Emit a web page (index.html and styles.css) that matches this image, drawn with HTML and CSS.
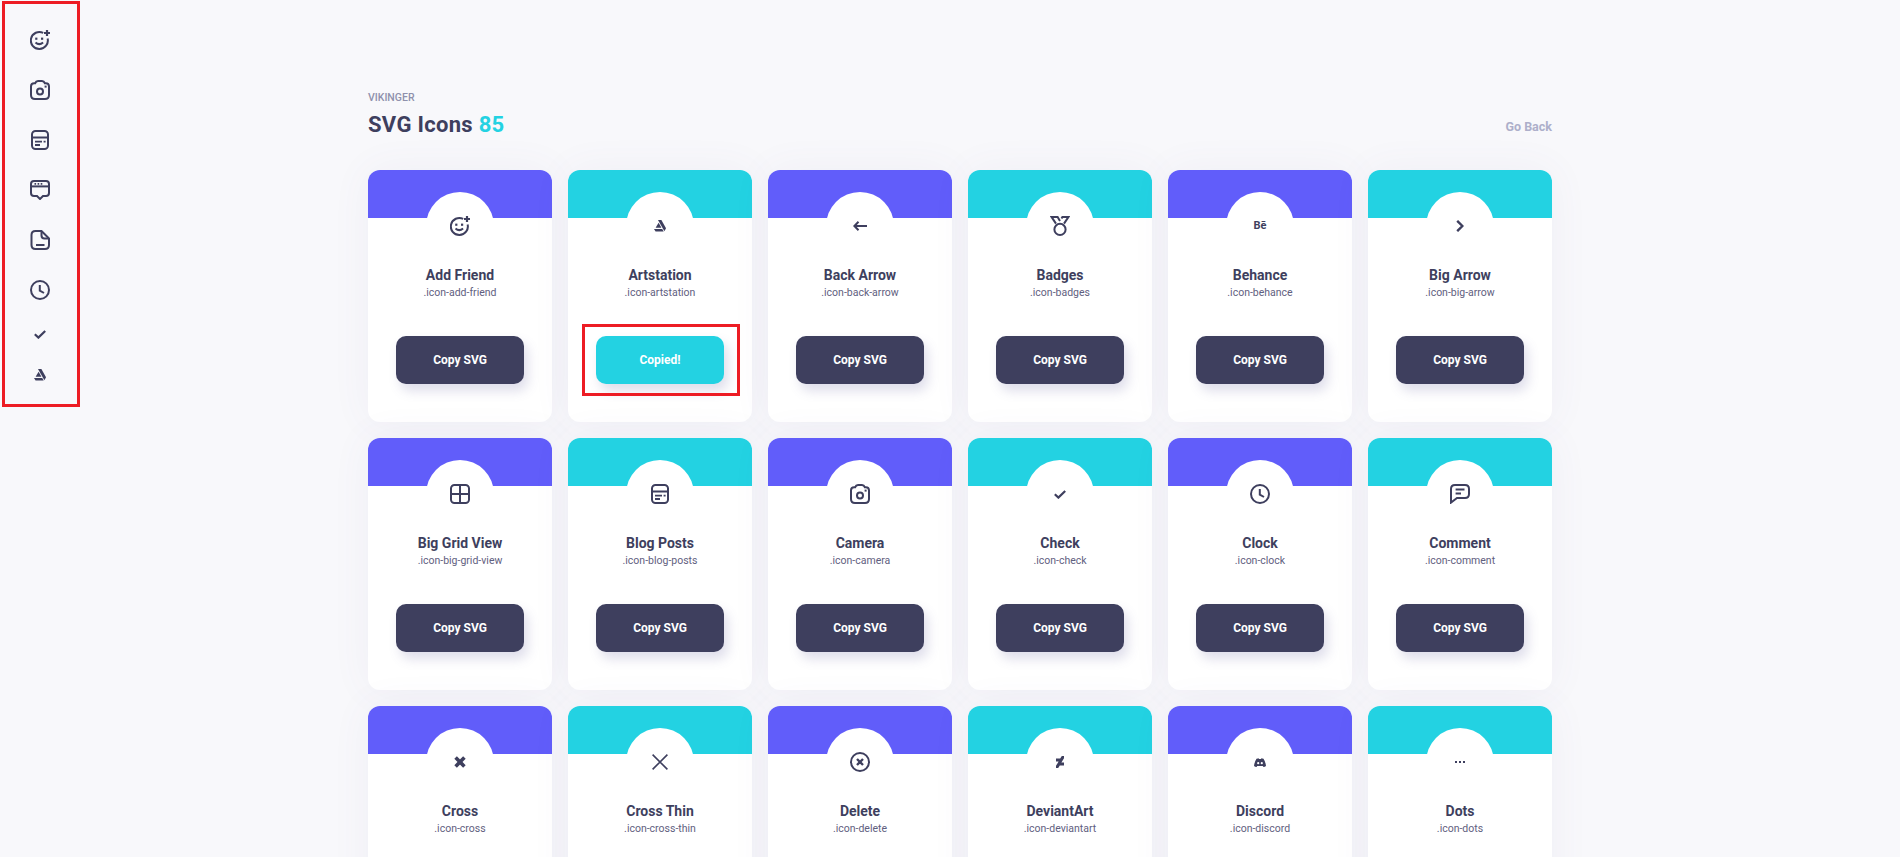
FILE: index.html
```html
<!DOCTYPE html>
<html lang="en">

<head>
    <meta charset="UTF-8">
    <meta name="viewport" content="width=device-width, initial-scale=1.0">
    <title>SVG Icons</title>
    <link rel="stylesheet" href="styles.css">
</head>

<body>
    <svg class="sprites" aria-hidden="true">
        <symbol id="i-add-friend" viewBox="0 0 20 20">
            <path d="M13.2 2.9A8.5 8.5 0 1 0 17.6 8.4" />
            <path d="M5.5 12.5q3.7 3.2 7.6 0" />
            <path d="M17 0v6M14 3h6" stroke-width="2.2" />
            <rect x="5.2" y="7.6" width="2.2" height="2.2" fill="#3e3f5e" stroke="none" />
            <rect x="11" y="7.6" width="2.2" height="2.2" fill="#3e3f5e" stroke="none" />
        </symbol>
        <symbol id="i-camera" viewBox="0 0 20 20">
            <path d="M1 6.5Q1 3.2 4.2 3.2H5.2Q6 1 8 1H12Q14 1 14.8 3.2H15.8Q19 3.2 19 6.5V15Q19 19 15 19H5Q1 19 1 15Z" />
            <circle cx="10" cy="11.5" r="3" />
            <rect x="14.6" y="5.6" width="2" height="2" fill="#3e3f5e" stroke="none" />
        </symbol>
        <symbol id="i-blog" viewBox="0 0 20 20">
            <rect x="2" y="1" width="16" height="18" rx="3.5" />
            <path d="M2 7.5H18" />
            <path d="M5 11.6h7M13.6 11.6h2M5 15h5" stroke-width="1.8" />
        </symbol>
        <symbol id="i-chat" viewBox="0 0 20 20">
            <path d="M4 1H16Q19 1 19 4V13Q19 16 16 16H13L10 19L7 16H4Q1 16 1 13V4Q1 1 4 1Z" />
            <path d="M1 6.4H19" />
            <path d="M4.5 3.8h1.6M7.6 3.8h1.6M10.7 3.8h1.6" stroke-width="1.7" />
        </symbol>
        <symbol id="i-doc" viewBox="0 0 20 20">
            <path d="M5.5 1H11.5L19 8.5V15Q19 19 15 19H5.5Q1.5 19 1.5 15V5Q1.5 1 5.5 1Z" />
            <path d="M11.5 1V5.5Q11.5 8.5 14.5 8.5H19" />
            <path d="M6 15H14.5" />
        </symbol>
        <symbol id="i-clock" viewBox="0 0 20 20">
            <circle cx="10" cy="10" r="9" />
            <path d="M9.8 5V10.6L14 13" />
        </symbol>
        <symbol id="i-check" viewBox="0 0 12 9">
            <path d="M.8 4.2L4.4 7.6L11.2 1" stroke-width="2.2" />
        </symbol>
        <symbol id="i-artstation" viewBox="0 0 12 12">
            <g fill="#3e3f5e" stroke="none">
                <path d="M4 0H7.4L12 8.2L10.4 11.2Z" />
                <path d="M1.6 7.8L4.6 2.8L7.4 7.8Z" />
                <path d="M0 8.9H8.2L9.7 11.6H1.6Z" />
            </g>
        </symbol>
        <symbol id="i-back" viewBox="0 0 14 10">
            <path d="M5.5 .8L1.4 5L5.5 9.2M1.4 5H14" />
        </symbol>
        <symbol id="i-badges" viewBox="0 0 20 20">
            <circle cx="10" cy="13.4" r="5.6" />
            <path d="M6 7.6L1.6 1H7.6L10 5" />
            <path d="M14 7.6L18.4 1H12.4L11.5 2.5" />
        </symbol>
        <symbol id="i-big-arrow" viewBox="0 0 8 12">
            <path d="M1.2 .8L6.4 6L1.2 11.2" stroke-width="2.4" />
        </symbol>
        <symbol id="i-grid" viewBox="0 0 20 20">
            <rect x="1" y="1" width="18" height="18" rx="3.5" />
            <path d="M10 1V19M1 10H19" />
        </symbol>
        <symbol id="i-comment" viewBox="0 0 20 20">
            <path d="M5 1H15Q19 1 19 5V10Q19 14 15 14H7L1 18.6V5Q1 1 5 1Z" />
            <path d="M5.6 5.5H14.5M5.6 9.5H11" />
        </symbol>
        <symbol id="i-cross" viewBox="0 0 12 12">
            <path d="M1.6 1.6L10.4 10.4M10.4 1.6L1.6 10.4" stroke-width="3.6" />
        </symbol>
        <symbol id="i-cross-thin" viewBox="0 0 16 16">
            <path d="M.6 .6L15.4 15.4M15.4 .6L.6 15.4" stroke-width="1.6" />
        </symbol>
        <symbol id="i-delete" viewBox="0 0 20 20">
            <circle cx="10" cy="10" r="9" />
            <path d="M7 7L13 13M13 7L7 13" stroke-width="2.4" />
        </symbol>
        <symbol id="i-deviantart" viewBox="0 0 8 12">
            <path fill="#3e3f5e" stroke="none" d="M8 0V2.2L5.4 6.4H8V9.4H3.8L2.2 12H0V9.8L2.6 5.6H0V2.6H4.2L5.8 0Z" />
        </symbol>
        <symbol id="i-discord" viewBox="0 0 12 9">
            <path fill="#3e3f5e" stroke="none" d="M2.5 .8Q4 .2 4.6 .2L5 .9H7L7.4 .2Q8.5 .3 9.5 .8Q11.6 4 12 8Q10.8 9 9.5 9L8.8 8H3.2L2.5 9Q1.2 9 0 8Q.4 4 2.5 .8Z" />
            <circle cx="4.2" cy="5.2" r="1.1" fill="#fff" stroke="none" />
            <circle cx="7.8" cy="5.2" r="1.1" fill="#fff" stroke="none" />
        </symbol>
        <symbol id="i-dots" viewBox="0 0 10 2">
            <path fill="#3e3f5e" stroke="none" d="M0 0h2v2H0zM4 0h2v2H4zM8 0h2v2H8z" />
        </symbol>
    </svg>

    <div class="page">
        <aside class="recent">
            <svg class="ico" width="20" height="20"><use href="#i-add-friend" /></svg>
            <svg class="ico" width="20" height="20"><use href="#i-camera" /></svg>
            <svg class="ico" width="20" height="20"><use href="#i-blog" /></svg>
            <svg class="ico" width="20" height="20"><use href="#i-chat" /></svg>
            <svg class="ico" width="20" height="20"><use href="#i-doc" /></svg>
            <svg class="ico" width="20" height="20"><use href="#i-clock" /></svg>
            <svg class="ico" width="12" height="9"><use href="#i-check" /></svg>
            <svg class="ico" width="12" height="12"><use href="#i-artstation" /></svg>
        </aside>

        <main class="content">
            <header class="head">
                <div>
                    <p class="pretitle">Vikinger</p>
                    <h1 class="title">SVG Icons <span class="count">85</span></h1>
                </div>
                <a class="back" href="#">Go Back</a>
            </header>

            <section class="grid">
                <article class="card">
                    <div class="card-top purple"></div>
                    <div class="circle"><svg class="ico" width="20" height="20"><use href="#i-add-friend" /></svg></div>
                    <h2 class="name">Add Friend</h2>
                    <p class="cls">.icon-add-friend</p>
                    <div class="btn-wrap"><button class="btn">Copy SVG</button></div>
                </article>
                <article class="card">
                    <div class="card-top cyan"></div>
                    <div class="circle"><svg class="ico" width="12" height="12"><use href="#i-artstation" /></svg></div>
                    <h2 class="name">Artstation</h2>
                    <p class="cls">.icon-artstation</p>
                    <div class="btn-wrap"><button class="btn copied">Copied!</button><span class="mark"></span></div>
                </article>
                <article class="card">
                    <div class="card-top purple"></div>
                    <div class="circle"><svg class="ico" width="14" height="10"><use href="#i-back" /></svg></div>
                    <h2 class="name">Back Arrow</h2>
                    <p class="cls">.icon-back-arrow</p>
                    <div class="btn-wrap"><button class="btn">Copy SVG</button></div>
                </article>
                <article class="card">
                    <div class="card-top cyan"></div>
                    <div class="circle"><svg class="ico" width="20" height="20"><use href="#i-badges" /></svg></div>
                    <h2 class="name">Badges</h2>
                    <p class="cls">.icon-badges</p>
                    <div class="btn-wrap"><button class="btn">Copy SVG</button></div>
                </article>
                <article class="card">
                    <div class="card-top purple"></div>
                    <div class="circle"><span class="behance">Bē</span></div>
                    <h2 class="name">Behance</h2>
                    <p class="cls">.icon-behance</p>
                    <div class="btn-wrap"><button class="btn">Copy SVG</button></div>
                </article>
                <article class="card">
                    <div class="card-top cyan"></div>
                    <div class="circle"><svg class="ico" width="8" height="12"><use href="#i-big-arrow" /></svg></div>
                    <h2 class="name">Big Arrow</h2>
                    <p class="cls">.icon-big-arrow</p>
                    <div class="btn-wrap"><button class="btn">Copy SVG</button></div>
                </article>

                <article class="card">
                    <div class="card-top purple"></div>
                    <div class="circle"><svg class="ico" width="20" height="20"><use href="#i-grid" /></svg></div>
                    <h2 class="name">Big Grid View</h2>
                    <p class="cls">.icon-big-grid-view</p>
                    <div class="btn-wrap"><button class="btn">Copy SVG</button></div>
                </article>
                <article class="card">
                    <div class="card-top cyan"></div>
                    <div class="circle"><svg class="ico" width="20" height="20"><use href="#i-blog" /></svg></div>
                    <h2 class="name">Blog Posts</h2>
                    <p class="cls">.icon-blog-posts</p>
                    <div class="btn-wrap"><button class="btn">Copy SVG</button></div>
                </article>
                <article class="card">
                    <div class="card-top purple"></div>
                    <div class="circle"><svg class="ico" width="20" height="20"><use href="#i-camera" /></svg></div>
                    <h2 class="name">Camera</h2>
                    <p class="cls">.icon-camera</p>
                    <div class="btn-wrap"><button class="btn">Copy SVG</button></div>
                </article>
                <article class="card">
                    <div class="card-top cyan"></div>
                    <div class="circle"><svg class="ico" width="12" height="9"><use href="#i-check" /></svg></div>
                    <h2 class="name">Check</h2>
                    <p class="cls">.icon-check</p>
                    <div class="btn-wrap"><button class="btn">Copy SVG</button></div>
                </article>
                <article class="card">
                    <div class="card-top purple"></div>
                    <div class="circle"><svg class="ico" width="20" height="20"><use href="#i-clock" /></svg></div>
                    <h2 class="name">Clock</h2>
                    <p class="cls">.icon-clock</p>
                    <div class="btn-wrap"><button class="btn">Copy SVG</button></div>
                </article>
                <article class="card">
                    <div class="card-top cyan"></div>
                    <div class="circle"><svg class="ico" width="20" height="20"><use href="#i-comment" /></svg></div>
                    <h2 class="name">Comment</h2>
                    <p class="cls">.icon-comment</p>
                    <div class="btn-wrap"><button class="btn">Copy SVG</button></div>
                </article>

                <article class="card">
                    <div class="card-top purple"></div>
                    <div class="circle"><svg class="ico" width="12" height="12"><use href="#i-cross" /></svg></div>
                    <h2 class="name">Cross</h2>
                    <p class="cls">.icon-cross</p>
                </article>
                <article class="card">
                    <div class="card-top cyan"></div>
                    <div class="circle"><svg class="ico" width="16" height="16"><use href="#i-cross-thin" /></svg></div>
                    <h2 class="name">Cross Thin</h2>
                    <p class="cls">.icon-cross-thin</p>
                </article>
                <article class="card">
                    <div class="card-top purple"></div>
                    <div class="circle"><svg class="ico" width="20" height="20"><use href="#i-delete" /></svg></div>
                    <h2 class="name">Delete</h2>
                    <p class="cls">.icon-delete</p>
                </article>
                <article class="card">
                    <div class="card-top cyan"></div>
                    <div class="circle"><svg class="ico" width="8" height="12"><use href="#i-deviantart" /></svg></div>
                    <h2 class="name">DeviantArt</h2>
                    <p class="cls">.icon-deviantart</p>
                </article>
                <article class="card">
                    <div class="card-top purple"></div>
                    <div class="circle"><svg class="ico" width="12" height="9"><use href="#i-discord" /></svg></div>
                    <h2 class="name">Discord</h2>
                    <p class="cls">.icon-discord</p>
                </article>
                <article class="card">
                    <div class="card-top cyan"></div>
                    <div class="circle"><svg class="ico" width="10" height="2"><use href="#i-dots" /></svg></div>
                    <h2 class="name">Dots</h2>
                    <p class="cls">.icon-dots</p>
                </article>
            </section>
        </main>
    </div>
</body>

</html>
```

FILE: styles.css
```css
* {
    margin: 0;
    padding: 0;
    box-sizing: border-box
}

html,
body {
    height: 100%;
    overflow: hidden
}

body {
    background: #f8f8fb;
    color: #3e3f5e;
    font-family: Roboto, "Liberation Sans", sans-serif
}

.sprites {
    display: block;
    width: 0;
    height: 0
}

.page {
    display: flex;
    align-items: flex-start
}

.ico {
    display: block;
    fill: none;
    stroke: #3e3f5e;
    stroke-width: 2
}

/* sidebar with the marked icons */
.recent {
    flex: none;
    display: flex;
    flex-direction: column;
    align-items: center;
    gap: 30px;
    width: 78px;
    height: 406px;
    margin: 1px 0 0 2px;
    padding: 26px 2px 0 0;
    border: 3px solid #ed1c24
}

.content {
    width: 1184px;
    margin-left: 288px;
    padding-top: 92px
}

.head {
    display: flex;
    justify-content: space-between;
    align-items: flex-end;
    margin-bottom: 33px
}

.pretitle {
    font-size: 10.5px;
    line-height: 12px;
    font-weight: 500;
    color: #8f91ac;
    text-transform: uppercase
}

.title {
    margin-top: 9px;
    font-size: 22px;
    line-height: 24px;
    font-weight: 700;
    letter-spacing: .3px
}

.count {
    color: #23d2e2
}

.back {
    margin-bottom: 2px;
    font-size: 12.5px;
    line-height: 16px;
    font-weight: 700;
    color: #adafca;
    text-decoration: none
}

.grid {
    display: grid;
    grid-template-columns: repeat(6, 184px);
    gap: 16px
}

.card {
    height: 252px;
    background: #fff;
    border-radius: 12px;
    box-shadow: 0 0 40px 0 rgba(94, 92, 154, .06);
    text-align: center;
    overflow: hidden
}

.card-top {
    height: 48px
}

.purple {
    background: #615dfa
}

.cyan {
    background: #23d2e2
}

.circle {
    display: flex;
    align-items: center;
    justify-content: center;
    width: 68px;
    height: 68px;
    margin: -26px auto 0;
    background: #fff;
    border-radius: 50%
}

.behance {
    font-size: 11px;
    font-weight: 700;
    line-height: 12px
}

.name {
    margin-top: 6px;
    font-size: 14px;
    line-height: 18px;
    font-weight: 700
}

.cls {
    margin-top: 3px;
    font-size: 10.5px;
    line-height: 12px;
    font-weight: 400;
    color: #5f6080
}

.btn-wrap {
    position: relative;
    width: 128px;
    margin: 37px auto 0
}

.btn {
    display: block;
    width: 128px;
    height: 48px;
    border: 0;
    border-radius: 10px;
    background: #3e3f5e;
    box-shadow: 4px 7px 12px 0 rgba(94, 92, 154, .2);
    color: #fff;
    font-family: inherit;
    font-size: 12px;
    font-weight: 700
}

.copied {
    background: #23d2e2
}

/* red marker drawn over the copied button */
.mark {
    position: absolute;
    top: -12px;
    right: -16px;
    bottom: -12px;
    left: -14px;
    border: 3px solid #ed1c24
}
```
